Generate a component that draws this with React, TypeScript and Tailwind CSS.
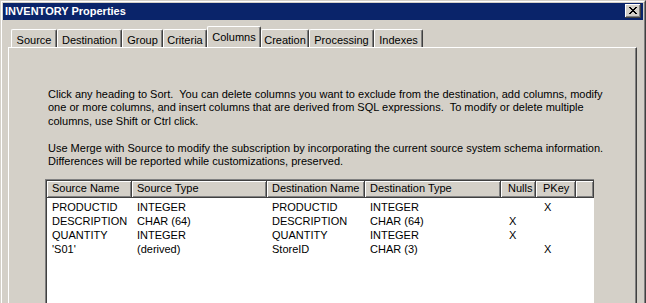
import React from 'react';

const tabs = [
  { label: 'Source', w: 'w-[46px]' },
  { label: 'Destination', w: 'w-[65px]' },
  { label: 'Group', w: 'w-[41px]' },
  { label: 'Criteria', w: 'w-[44px]' },
  { label: 'Columns', w: 'w-[54px]', active: true },
  { label: 'Creation', w: 'w-[48px]' },
  { label: 'Processing', w: 'w-[65px]' },
  { label: 'Indexes', w: 'w-[49px]' },
];

const cols = [
  { label: 'Source Name', w: 'w-[85px]' },
  { label: 'Source Type', w: 'w-[135px]' },
  { label: 'Destination Name', w: 'w-[98px]' },
  { label: 'Destination Type', w: 'w-[136px]' },
  { label: 'Nulls', w: 'w-[35px]' },
  { label: 'PKey', w: 'w-[40px]' },
];

const rows = [
  ['PRODUCTID', 'INTEGER', 'PRODUCTID', 'INTEGER', '', 'X'],
  ['DESCRIPTION', 'CHAR (64)', 'DESCRIPTION', 'CHAR (64)', 'X', ''],
  ['QUANTITY', 'INTEGER', 'QUANTITY', 'INTEGER', 'X', ''],
  ["'S01'", '(derived)', 'StoreID', 'CHAR (3)', '', 'X'],
];

const Tab = ({ label, w, active }: { label: string; w: string; active?: boolean }) =>
  active ? (
    <div
      className={`${w} relative z-10 -mb-[1px] flex h-[21px] items-start justify-center rounded-t-[2px] border-l border-t border-r border-l-white border-t-white border-r-[#404040] bg-[#d4d0c8] pt-[2px] shadow-[inset_-1px_0_0_#808080]`}
    >
      {label}
    </div>
  ) : (
    <div
      className={`${w} mt-[3px] flex h-[18px] items-start justify-center rounded-t-[2px] border-l border-t border-r border-l-white border-t-white border-r-[#404040] pt-[2px] shadow-[inset_-1px_0_0_#808080]`}
    >
      {label}
    </div>
  );

export default function App() {
  return (
    <div
      className="h-[303px] w-[646px] overflow-hidden bg-[#d4d0c8] text-[11px] text-black"
      style={{ fontFamily: '"Liberation Sans", Arial, sans-serif' }}
    >
      <div className="h-full border-l border-t border-r border-l-[#d4d0c8] border-t-[#d4d0c8] border-r-[#404040]">
        <div className="flex h-full flex-col border-l border-t border-r border-l-white border-t-white border-r-[#808080] p-[1px]">
          {/* title bar */}
          <div className="flex h-[18px] items-center justify-between bg-[#0a246a] pl-[2px] pr-[2px]">
            <span className="text-[11px] font-bold text-white">INVENTORY Properties</span>
            <div className="flex h-[14px] w-[16px] items-center justify-center border-b border-r border-b-[#404040] border-r-[#404040] bg-[#d4d0c8] shadow-[inset_1px_1px_0_#fff,inset_-1px_-1px_0_#808080]">
              <svg width="8" height="7" viewBox="0 0 8 7">
                <path d="M0 0h2v1h1v1h2v-1h1v-1h2v1h-1v1h-1v1h-1v1h1v1h1v1h1v1h-2v-1h-1v-1h-2v1h-1v1h-2v-1h1v-1h1v-1h1v-1h-1v-1h-1v-1h-1z" fill="#000" />
              </svg>
            </div>
          </div>

          {/* tabs */}
          <div className="mt-[6px] flex pl-[8px]">
            {tabs.map((t) => (
              <Tab key={t.label} {...t} />
            ))}
          </div>

          {/* panel */}
          <div className="ml-[5px] mr-[6px] flex-1 border-l border-t border-r border-l-white border-t-white border-r-[#404040] pl-[36px] pt-[40px] shadow-[inset_-1px_0_0_#808080]">
            <div className="pl-[3px] leading-[13.5px]">
              <p>
                Click any heading to Sort.&nbsp; You can delete columns you want to exclude from the destination, add columns, modify
                <br />
                one or more columns, and insert columns that are derived from SQL expressions.&nbsp; To modify or delete multiple
                <br />
                columns, use Shift or Ctrl click.
              </p>
              <p className="mt-[13.5px]">
                Use Merge with Source to modify the subscription by incorporating the current source system schema information.
                <br />
                Differences will be reported while customizations, preserved.
              </p>
            </div>

            {/* list view */}
            <div className="mt-[10px] h-[140px] w-[549px] border-l border-t border-l-[#808080] border-t-[#808080] bg-white">
              <div className="h-full border-l border-t border-l-[#404040] border-t-[#404040]">
                <div className="flex h-[17px] bg-[#d4d0c8]">
                  {cols.map((c) => (
                    <div
                      key={c.label}
                      className={`${c.w} flex shrink-0 items-center border-b border-r border-b-[#404040] border-r-[#404040] shadow-[inset_1px_1px_0_#fff,inset_-1px_-1px_0_#808080] ${c.label === 'Nulls' || c.label === 'PKey' ? 'pl-[7px]' : 'pl-[5px]'}`}
                    >
                      {c.label}
                    </div>
                  ))}
                  <div className="flex-1 border-b border-r border-b-[#404040] border-r-[#404040] shadow-[inset_1px_1px_0_#fff,inset_-1px_-1px_0_#808080]" />
                </div>
                <div className="pt-[2px]">
                  {rows.map((r, i) => (
                    <div key={i} className="flex h-[14px] items-center leading-[14px]">
                      {r.map((cell, j) => (
                        <div
                          key={j}
                          className={`${cols[j].w} shrink-0 ${j >= 4 ? 'pl-[8px]' : 'pl-[5px]'}`}
                        >
                          {cell}
                        </div>
                      ))}
                    </div>
                  ))}
                </div>
              </div>
            </div>
          </div>
        </div>
      </div>
    </div>
  );
}
